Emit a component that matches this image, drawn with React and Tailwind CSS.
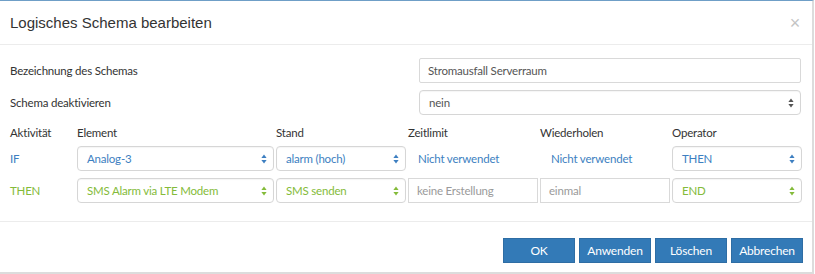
import React from 'react'

// Small stacked up/down arrows like the native mac select
const SelectArrows = ({ color }) => (
    <svg width="6" height="10" viewBox="0 0 6 10" className="shrink-0">
        <path d="M3 0.5 L5.6 4 L0.4 4 Z" fill={color} />
        <path d="M3 9.5 L5.6 6 L0.4 6 Z" fill={color} />
    </svg>
)

const Select = ({ value, color = '#555555', arrow = '#555555', className = '' }) => (
    <div className={`flex h-[25px] items-center justify-between rounded-[4px] border border-[#d6d6d6] bg-white pl-[9px] pr-[6px] shadow-[inset_0_1px_1px_rgba(0,0,0,0.04)] ${className}`}>
        <span style={{ color }}>{value}</span>
        <SelectArrows color={arrow} />
    </div>
)

const TextBox = ({ value, className = '', muted = false }) => (
    <div className={`flex h-[25px] items-center border border-[#d9d9d9] bg-white pl-[8px] ${muted ? 'text-[#9a9a9a]' : 'text-[#555555]'} ${className}`}>
        {value}
    </div>
)

const BLUE = '#3d7fc1'
const GREEN = '#84bb3a'

const App = () => {
    return (
        <div className="h-[274px] w-[815px] bg-white font-['Lato',sans-serif] text-[11.5px] leading-[18px] tracking-[-0.2px] text-[#333333]">
            <div className="flex h-[274px] w-[814px] flex-col border-t border-t-[#6f9fc7] border-r-2 border-r-[#dcdcdc] border-b-2 border-b-[#dcdcdc]">
                {/* Header */}
                <div className="flex h-[44px] shrink-0 items-center justify-between border-b border-[#ececec] pl-[10px] pr-[12px]">
                    <h4 className="font-['Liberation_Sans',sans-serif] text-[15px] tracking-normal text-[#333333]">Logisches Schema bearbeiten</h4>
                    <span className="font-['Liberation_Sans',sans-serif] text-[18px] leading-none text-[#c4c4c4]">×</span>
                </div>

                {/* Body */}
                <div className="flex-1 pl-[10px] pr-[11px] pt-[13px]">
                    <div className="flex items-center">
                        <div className="w-[409px]">Bezeichnung des Schemas</div>
                        <TextBox value="Stromausfall Serverraum" className="h-[24px] flex-1 rounded-[2px]" />
                    </div>
                    <div className="mt-[7px] flex items-center">
                        <div className="w-[409px]">Schema deaktivieren</div>
                        <Select value="nein" className="flex-1" />
                    </div>

                    <div className="mt-[9px] grid grid-cols-[65px_197px_130px_130px_130px_130px] gap-x-[2px]">
                        <div>Aktivität</div>
                        <div>Element</div>
                        <div>Stand</div>
                        <div>Zeitlimit</div>
                        <div>Wiederholen</div>
                        <div>Operator</div>
                    </div>

                    <div className="mt-[4px] grid grid-cols-[65px_197px_130px_130px_130px_130px] items-center gap-x-[2px] gap-y-[7px]">
                        <div style={{ color: BLUE }}>IF</div>
                        <Select value="Analog-3" color={BLUE} arrow={BLUE} />
                        <Select value="alarm (hoch)" color={BLUE} arrow={BLUE} />
                        <div className="pl-[10px]" style={{ color: BLUE }}>Nicht verwendet</div>
                        <div className="pl-[11px]" style={{ color: BLUE }}>Nicht verwendet</div>
                        <Select value="THEN" color={BLUE} arrow={BLUE} />

                        <div style={{ color: GREEN }}>THEN</div>
                        <Select value="SMS Alarm via LTE Modem" color={GREEN} arrow={GREEN} />
                        <Select value="SMS senden" color={GREEN} arrow={GREEN} />
                        <TextBox value="keine Erstellung" muted />
                        <TextBox value="einmal" muted />
                        <Select value="END" color={GREEN} arrow={GREEN} />
                    </div>
                </div>

                {/* Footer */}
                <div className="flex h-[51px] shrink-0 items-start justify-end gap-x-[4px] border-t border-[#ececec] pr-[9px] pt-[16px]">
                    {['OK', 'Anwenden', 'Löschen', 'Abbrechen'].map((label) => (
                        <button key={label} className="h-[25px] w-[72px] border border-[#2e6da4] bg-[#337ab7] text-[12px] text-white">
                            {label}
                        </button>
                    ))}
                </div>
            </div>
        </div>
    )
}

export default App
